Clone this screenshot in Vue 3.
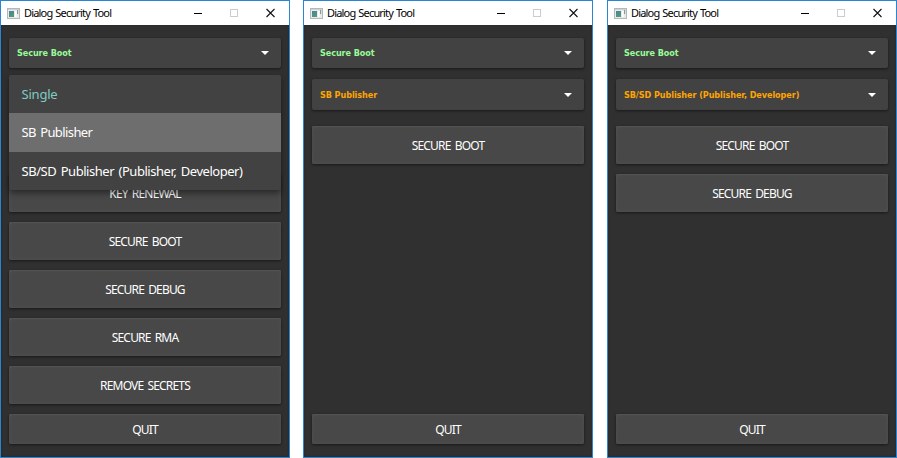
<script setup>
const windows = [
  { id: 'single', mode: null, open: true, actions: ['KEY RENEWAL', 'SECURE BOOT', 'SECURE DEBUG', 'SECURE RMA', 'REMOVE SECRETS'] },
  { id: 'publisher', mode: 'SB Publisher', open: false, actions: ['SECURE BOOT'] },
  { id: 'developer', mode: 'SB/SD Publisher (Publisher, Developer)', open: false, actions: ['SECURE BOOT', 'SECURE DEBUG'] },
]
const options = ['Single', 'SB Publisher', 'SB/SD Publisher (Publisher, Developer)']
</script>

<template>
  <main class="desktop">
    <section v-for="w in windows" :key="w.id" class="window" :class="w.id">
      <header class="titlebar">
        <svg class="app-icon" width="13" height="11" viewBox="0 0 13 11">
          <defs>
            <linearGradient :id="'g-' + w.id" x1="0" y1="0" x2="0.4" y2="1">
              <stop offset="0" stop-color="#4b7fae" />
              <stop offset="1" stop-color="#4f9c6c" />
            </linearGradient>
          </defs>
          <rect x="0.5" y="0.5" width="12" height="10" fill="#e9ebeb" stroke="#b4b8b8" />
          <rect x="1" y="1" width="11" height="1" fill="#d0d3d5" />
          <rect x="2" y="3" width="5" height="6" :fill="`url(#g-${w.id})`" />
          <rect x="8" y="3" width="1.5" height="6" fill="#fff" />
          <rect x="10" y="2" width="1.2" height="4" fill="#82a094" />
        </svg>
        <span class="title">Dialog Security Tool</span>
        <svg class="controls" width="82" height="12" viewBox="0 0 82 12">
          <path d="M0 6.5h8" stroke="#000" />
          <rect x="36.5" y="2.5" width="7" height="7" fill="none" stroke="#ccc" />
          <path d="M72.5 2l8 8M80.5 2l-8 8" stroke="#111" stroke-width="1.1" />
        </svg>
      </header>
      <div class="body">
        <div class="combo">
          <span class="value">Secure Boot</span>
          <svg class="arrow" width="8" height="4" viewBox="0 0 8 4"><path d="M0 0h8l-4 4z" fill="#fff" /></svg>
          <ul v-if="w.open" class="menu">
            <li v-for="(o, i) in options" :key="o" :class="{ current: i === 0, hover: i === 1 }">{{ o }}</li>
          </ul>
        </div>
        <div v-if="w.mode" class="combo mode">
          <span class="value">{{ w.mode }}</span>
          <svg class="arrow" width="8" height="4" viewBox="0 0 8 4"><path d="M0 0h8l-4 4z" fill="#fff" /></svg>
        </div>
        <div class="actions">
          <button v-for="a in w.actions" :key="a">{{ a }}</button>
        </div>
        <button class="quit">QUIT</button>
      </div>
    </section>
  </main>
</template>

<style>
body { background: #fff; overflow: hidden; }
</style>

<style scoped>
* { box-sizing: border-box; }
.desktop { display: flex; width: 897px; height: 458px; }
.window {
  display: flex; flex-direction: column; width: 290px; height: 458px;
  border: 1px solid #2a85d2; background: #303030; flex: none;
}
.publisher { margin-left: 13px; }
.developer { margin-left: 14px; }
.titlebar { display: flex; align-items: center; height: 24px; flex: none; padding: 0 13px 0 6px; background: #fff; }
.app-icon { flex: none; }
.title {
  margin-left: 4px; font: 11px/16px "Noto Sans", sans-serif; letter-spacing: -0.83px; word-spacing: 1px;
  color: #000; white-space: nowrap;
}
.controls { margin-left: auto; flex: none; }
.body { display: flex; flex-direction: column; flex: 1; padding: 13px 8px; box-shadow: inset 0 0 2px #222; }
.combo {
  position: relative; display: flex; align-items: center; justify-content: space-between;
  height: 30px; flex: none; padding: 0 12px 0 8px; border-radius: 2px; background: #424242;
  box-shadow: 0 1px 3px rgba(0, 0, 0, .5);
}
.value { font: bold 9px/14px "DejaVu Sans Condensed", "DejaVu Sans", sans-serif; letter-spacing: -0.07px; color: #98fb98; white-space: nowrap; }
.mode { height: 31px; margin-top: 11px; }
.mode .value { color: #ffa500; }
.menu {
  position: absolute; z-index: 2; top: 37px; left: 0; width: 272px; height: 115px;
  margin: 0; padding: 0; list-style: none; border-radius: 2px; background: #424242;
  box-shadow: 0 3px 6px rgba(0, 0, 0, .45);
}
.menu li {
  height: 38.33px; padding-left: 12.5px; font: 13px/38px "Noto Sans", sans-serif;
  letter-spacing: -0.46px; word-spacing: 1.5px; color: #fff; white-space: nowrap;
}
.menu .current { color: #80cbc4; letter-spacing: -0.2px; }
.menu .hover { background: #6e6e6e; letter-spacing: -0.6px; }
.actions { display: flex; flex-direction: column; gap: 10px; margin-top: 16px; }
.single .actions { margin-top: 106px; }
button {
  height: 38px; flex: none; padding: 2px 0 0; border: 0; border-radius: 2px; color: #fff;
  font: 12px/16px "Noto Sans", sans-serif; letter-spacing: -0.82px; word-spacing: 1.8px;
  background: #484848;
  box-shadow: inset 0 1px 1px #545454, inset 0 0 4px #525252, 0 1px 3px rgba(0, 0, 0, .5);
}
.quit { height: 30px; margin-top: auto; }
</style>
